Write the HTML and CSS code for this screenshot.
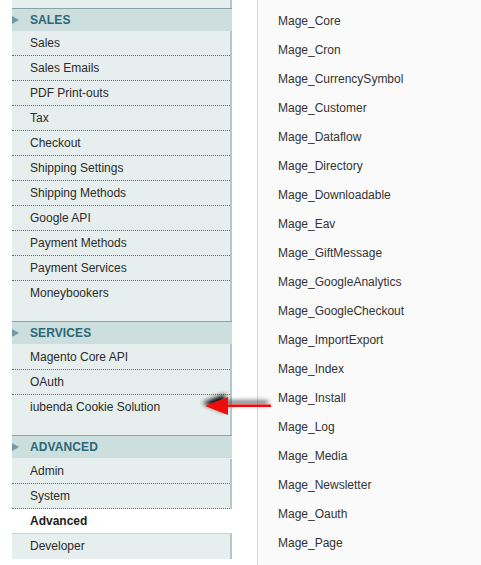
FILE: index.html
```html
<!DOCTYPE html>
<html>
<head>
<meta charset="utf-8">
<link rel="stylesheet" href="styles.css">
</head>
<body>
<div class="page">
  <div class="gutter"></div>
  <aside class="sidebar">
    <div class="remnant"></div>
    <section class="group">
      <h3 class="head"><span class="tri"></span>SALES</h3>
      <ul class="items">
        <li>Sales</li>
        <li>Sales Emails</li>
        <li>PDF Print-outs</li>
        <li>Tax</li>
        <li>Checkout</li>
        <li>Shipping Settings</li>
        <li>Shipping Methods</li>
        <li>Google API</li>
        <li>Payment Methods</li>
        <li>Payment Services</li>
        <li>Moneybookers</li>
      </ul>
    </section>
    <section class="group">
      <h3 class="head"><span class="tri"></span>SERVICES</h3>
      <ul class="items">
        <li>Magento Core API</li>
        <li>OAuth</li>
        <li>iubenda Cookie Solution</li>
      </ul>
    </section>
    <section class="group">
      <h3 class="head"><span class="tri"></span>ADVANCED</h3>
      <ul class="items tight">
        <li>Admin</li>
        <li>System</li>
        <li class="active">Advanced</li>
        <li class="boxed">Developer</li>
      </ul>
    </section>
  </aside>
  <div class="spacer"></div>
  <main class="content">
    <ul class="modules">
      <li>Mage_Core</li>
      <li>Mage_Cron</li>
      <li>Mage_CurrencySymbol</li>
      <li>Mage_Customer</li>
      <li>Mage_Dataflow</li>
      <li>Mage_Directory</li>
      <li>Mage_Downloadable</li>
      <li>Mage_Eav</li>
      <li>Mage_GiftMessage</li>
      <li>Mage_GoogleAnalytics</li>
      <li>Mage_GoogleCheckout</li>
      <li>Mage_ImportExport</li>
      <li>Mage_Index</li>
      <li>Mage_Install</li>
      <li>Mage_Log</li>
      <li>Mage_Media</li>
      <li>Mage_Newsletter</li>
      <li>Mage_Oauth</li>
      <li>Mage_Page</li>
    </ul>
  </main>
</div>
<svg class="arrow" width="80" height="34" viewBox="0 0 80 34">
  <defs>
    <filter id="sh" x="-30%" y="-80%" width="160%" height="260%">
      <feGaussianBlur in="SourceAlpha" stdDeviation="2.4"/>
      <feOffset dx="-3" dy="-3" result="b"/>
      <feComponentTransfer><feFuncA type="linear" slope="1"/></feComponentTransfer>
      <feMerge><feMergeNode/><feMergeNode in="SourceGraphic"/></feMerge>
    </filter>
  </defs>
  <g filter="url(#sh)">
    <polygon points="5,18 28,9 28,27" fill="#ee1111"/>
    <rect x="27" y="16.5" width="44" height="2.5" fill="#ee1111"/>
  </g>
</svg>
</body>
</html>
```
FILE: styles.css
```css
html, body {
  margin: 0;
  padding: 0;
  background: #ffffff;
}
body {
  font-family: "Liberation Sans", Arial, sans-serif;
  font-size: 12px;
  color: #2b2b2b;
  width: 481px;
  height: 565px;
  overflow: hidden;
  position: relative;
}
.page {
  display: flex;
  align-items: stretch;
  height: 565px;
}
.gutter {
  width: 12px;
  flex: none;
}
.sidebar {
  width: 220px;
  flex: none;
  overflow: hidden;
}
.remnant {
  height: 8px;
  background: #e6efed;
  border-right: 2px solid #b3c7c7;
}
.head {
  margin: 0;
  height: 22px;
  border-top: 1px solid #88a4aa;
  background: #ccdedd;
  display: flex;
  align-items: center;
  font-size: 12px;
  font-weight: bold;
  color: #2a6878;
  letter-spacing: 0.1px;
}
.tri {
  width: 0;
  height: 0;
  border-top: 4px solid transparent;
  border-bottom: 4px solid transparent;
  border-left: 7px solid #6f9ba6;
  margin-right: 11px;
}
.items {
  list-style: none;
  margin: 0;
  padding: 0 0 16px 0;
  background: #e6efed;
  border-right: 2px solid #b3c7c7;
}
.group + .group .items {
  padding-top: 1px;
}
.items li {
  height: 24px;
  line-height: 24px;
  padding-left: 18px;
  border-bottom: 1px dotted #6a6a6a;
}
.items li:last-child {
  border-bottom: none;
}
.group + .group .items.tight {
  padding: 1px 0 0 0;
  background: #e6efed;
  border-right: none;
}
.items.tight li {
  background: #e6efed;
  border-right: 2px solid #b3c7c7;
}
.items.tight li.active {
  background: #ffffff;
  border-right: 2px solid transparent;
  border-bottom: none;
  font-weight: bold;
  color: #1e1e1e;
}
.items.tight li.boxed {
  border-top: 1px solid #c3d3d3;
  height: 25px;
  line-height: 25px;
}
.spacer {
  width: 25px;
  flex: none;
}
.content {
  flex: 1;
  border-left: 1px solid #d6d6d6;
  background: #fafafa;
}
.modules {
  list-style: none;
  margin: 0;
  padding: 7px 0 0 20px;
  color: #333333;
}
.modules li {
  height: 29px;
  line-height: 29px;
}
.arrow {
  position: absolute;
  left: 200px;
  top: 388px;
}
```
